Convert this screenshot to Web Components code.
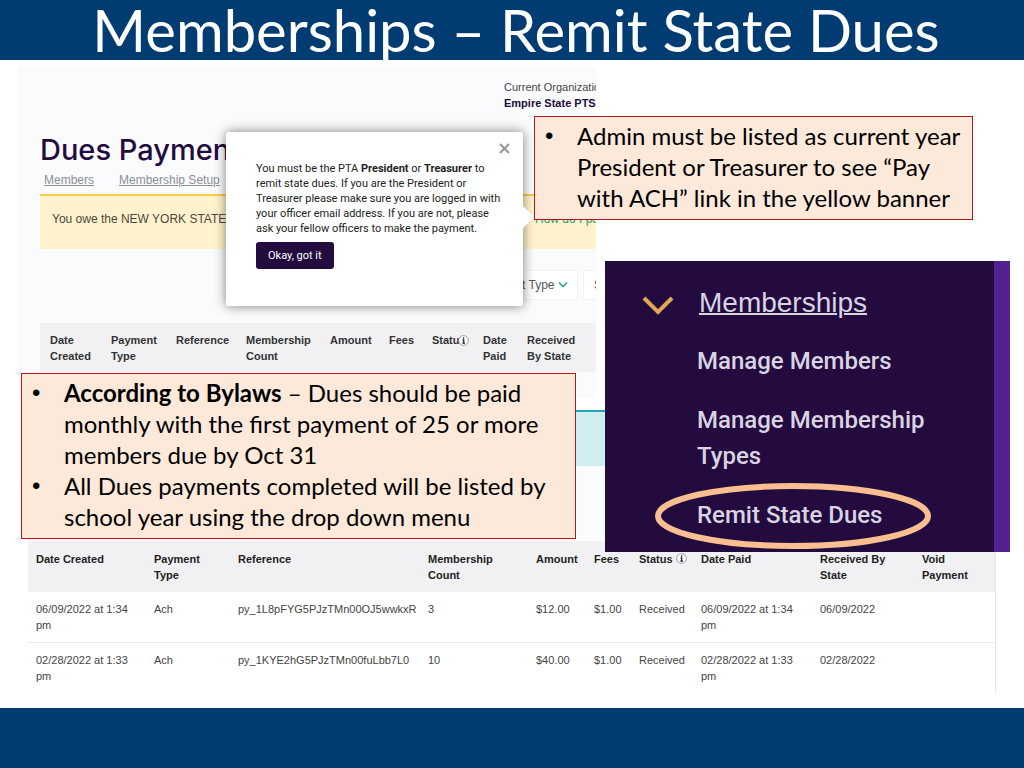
<!DOCTYPE html>
<html lang="en">
<head>
<meta charset="utf-8">
<title>Memberships – Remit State Dues</title>
<style>
body { margin: 0; font-family: "Liberation Sans", Arial, sans-serif; background: #fff; }
</style>
</head>
<body>
<slide-page>
  <span slot="title">Memberships – Remit State Dues</span>
  <dues-panel></dues-panel>
  <year-notice></year-notice>
  <payment-history></payment-history>
  <officer-popover class="popover"></officer-popover>
  <callout-box class="admin">
    <callout-item>Admin must be listed as current year President or Treasurer to see “Pay with ACH” link in the yellow banner</callout-item>
  </callout-box>
  <callout-box class="bylaws">
    <callout-item><b>According to Bylaws</b> – Dues should be paid monthly with the first payment of 25 or more members due by Oct 31</callout-item>
    <callout-item>All Dues payments completed will be listed by school year using the drop down menu</callout-item>
  </callout-box>
  <side-menu></side-menu>
</slide-page>

<script>
const define = (name, html) => {
  const template = document.createElement('template');
  template.innerHTML = html;
  customElements.define(name, class extends HTMLElement {
    constructor() {
      super();
      this.attachShadow({ mode: 'open' }).append(template.content.cloneNode(true));
    }
  });
};

const infoIcon = `<svg width="11" height="11" viewBox="0 0 11 11" aria-hidden="true"><circle cx="5.5" cy="5.5" r="4.9" fill="#fff" stroke="#777" stroke-width=".7"/><path d="M5.6 2.3v1.4M4.5 4.9h1.2v3.2M4.3 8.2h2.7" fill="none" stroke="#222" stroke-width="1.3"/></svg>`;

define('slide-page', `
<style>
:host { display: flex; flex-direction: column; min-height: 100vh; }
header { background: #003c71; height: 60px; text-align: center; }
h1 { margin: 0; padding-left: 8px; color: #fff; font: 400 58px/60px Lato, sans-serif; white-space: nowrap; }
main { position: relative; flex: 1; padding: 7px 28px 15px; }
footer { background: #003c71; height: 60px; }
::slotted(dues-panel) { margin: 0 400px 0 -10px; }
::slotted(year-notice) { margin-right: 391px; }
::slotted(officer-popover) { position: absolute; left: 226px; top: 72px; width: 297px; }
::slotted(callout-box) { position: absolute; }
::slotted(.admin) { right: 51px; top: 56px; width: 439px; }
::slotted(.bylaws) { left: 21px; top: 313px; width: 555px; }
::slotted(side-menu) { position: absolute; right: 14px; top: 201px; width: 405px; }
</style>
<header><h1><slot name="title"></slot></h1></header>
<main><slot></slot></main>
<footer></footer>`);

define('dues-panel', `
<style>
:host { display: block; overflow: hidden; background: #fafbfd; color: #333; height: 331px; }
.org { margin: 12px 0 0 486px; font-size: 11px; line-height: 16px; white-space: nowrap; color: #444; }
.org b { display: block; color: #230b3f; }
h2 { margin: 22px 0 0 22px; font: 500 29px/34px Inter, sans-serif; color: #230b3f; white-space: nowrap; }
nav { display: flex; gap: 25px; margin: 4px 0 5px 26px; font-size: 12px; line-height: 18px; }
nav a { color: #8d8f95; white-space: nowrap; }
.banner { display: flex; gap: 110px; margin-left: 22px; padding: 14px 12px 21px; border-top: 2px solid #fbcb4b; background: #fff2cc; font-size: 12px; line-height: 18px; white-space: nowrap; color: #4c4740; }
.banner a { color: #1f9d6b; text-decoration: none; }
.banner span { width: 373px; overflow: hidden; flex: none; }
.filters { display: flex; gap: 5px; margin: 21px 0 23px 454px; }
.filter { position: relative; flex: none; }
select { appearance: none; width: 106px; height: 30px; border: 1px solid #f1f2f4; border-radius: 3px; background: #fff; padding: 0 5px; font: 12px/18px "Liberation Sans", sans-serif; color: #555; }
.filter + .filter select { padding-left: 10px; }
.filter svg { position: absolute; right: 10px; top: 11px; }
table { border-collapse: collapse; table-layout: fixed; margin-left: 22px; width: calc(100% - 22px); background: #f1f1f3; }
th { padding: 9px 0 8px 10px; text-align: left; vertical-align: top; font-size: 11px; line-height: 16px; white-space: nowrap; }
th svg { vertical-align: -2px; margin-left: -8px; }
</style>
<div class="org">Current Organization<b>Empire State PTSA</b></div>
<h2>Dues Payments</h2>
<nav><a href="#members">Members</a><a href="#setup">Membership Setup</a></nav>
<div class="banner"><span>You owe the NEW YORK STATE PTA</span><a href="#how">How do I pay?</a></div>
<div class="filters">
  <div class="filter"><select aria-label="Payment Type"><option>Payment Type</option></select><svg width="10" height="8" viewBox="0 0 10 8"><path d="M1 1.5l4 4 4-4" fill="none" stroke="#22b08a" stroke-width="1.7"/></svg></div>
  <div class="filter"><select aria-label="Status"><option>Status</option></select></div>
</div>
<table>
<colgroup><col style="width:61px"><col style="width:65px"><col style="width:70px"><col style="width:84px"><col style="width:59px"><col style="width:43px"><col style="width:51px"><col style="width:44px"><col></colgroup>
<tr><th>Date<br>Created</th><th>Payment<br>Type</th><th>Reference</th><th>Membership<br>Count</th><th>Amount</th><th>Fees</th><th>Status${infoIcon}</th><th>Date<br>Paid</th><th>Received<br>By State</th></tr>
</table>`);

define('year-notice', `
<style>
:host { display: block; padding: 12px 0 75px; background: linear-gradient(#fff 12px, #fafbfd 12px); }
div { height: 54px; border-top: 2px solid #26a5b8; background: #d0edf0; }
</style>
<div></div>`);

define('payment-history', `
<style>
:host { display: block; border-right: 1px solid #e4e6e9; color: #444; }
table { border-collapse: collapse; table-layout: fixed; width: 100%; font-size: 11px; line-height: 16px; }
th, td { padding: 9px 0 9px 8px; text-align: left; vertical-align: top; }
th { color: #222; padding-top: 10px; }
thead { background: #f1f1f3; }
tbody tr + tr { border-top: 1px solid #e7e9ec; }
.t { white-space: nowrap; }
svg { vertical-align: -1px; margin-left: 3px; }
</style>
<table>
<colgroup><col style="width:118px"><col style="width:84px"><col style="width:190px"><col style="width:108px"><col style="width:58px"><col style="width:45px"><col style="width:62px"><col style="width:119px"><col style="width:102px"><col></colgroup>
<thead><tr><th>Date Created</th><th>Payment<br>Type</th><th>Reference</th><th>Membership<br>Count</th><th>Amount</th><th>Fees</th><th class="t">Status${infoIcon}</th><th>Date Paid</th><th>Received By<br>State</th><th>Void<br>Payment</th></tr></thead>
<tbody>
<tr><td>06/09/2022 at 1:34<br>pm</td><td>Ach</td><td>py_1L8pFYG5PJzTMn00OJ5wwkxR</td><td>3</td><td>$12.00</td><td>$1.00</td><td>Received</td><td>06/09/2022 at 1:34<br>pm</td><td>06/09/2022</td><td></td></tr>
<tr><td>02/28/2022 at 1:33<br>pm</td><td>Ach</td><td>py_1KYE2hG5PJzTMn00fuLbb7L0</td><td>10</td><td>$40.00</td><td>$1.00</td><td>Received</td><td>02/28/2022 at 1:33<br>pm</td><td>02/28/2022</td><td></td></tr>
</tbody></table>`);

define('officer-popover', `
<style>
:host { display: block; box-sizing: border-box; padding: 29px 28px 37px 30px; background: #fff; border-radius: 3px; box-shadow: 0 0 12px rgba(0,0,0,.5); color: #222; font-size: 11px; }
:host::after { content: ""; position: absolute; left: 100%; top: 74px; border: 11px solid transparent; border-left-color: #fff; border-right: 0; }
p { margin: 0 0 6px; font: 11px/15px Roboto, sans-serif; white-space: nowrap; }
button { font: 11px/15px Roboto, sans-serif; color: #fff; background: #230b3f; border: 0; border-radius: 3px; padding: 6px 12px; }
.close { position: absolute; right: 13px; top: 11px; padding: 0; background: none; line-height: 0; }
</style>
<button class="close" aria-label="Close"><svg width="11" height="11" viewBox="0 0 11 11"><path d="M1 1l9 9M10 1l-9 9" stroke="#999" stroke-width="2.2"/></svg></button>
<p>You must be the PTA <b>President</b> or <b>Treasurer</b> to<br>remit state dues. If you are the President or<br>Treasurer please make sure you are logged in with<br>your officer email address. If you are not, please<br>ask your fellow officers to make the payment.</p>
<button>Okay, got it</button>`);

define('callout-box', `
<style>
:host { display: block; box-sizing: border-box; padding: 3px 10px 6px; border: 1px solid #b5181b; background: #fde9d9; color: #000; font: 24px/31px Lato, sans-serif; }
</style>
<div role="list"><slot></slot></div>`);

define('callout-item', `
<style>
:host { display: flex; }
i { flex: none; width: 32px; font: 24px/31px "Liberation Sans", sans-serif; }
</style>
<i aria-hidden="true">•</i><div role="listitem"><slot></slot></div>`);

define('side-menu', `
<style>
:host { display: block; box-sizing: border-box; height: 291px; border-right: 16px solid #53208f; background: #230b3f; padding: 24px 50px 0 37px; font: 500 24px/36px Roboto, sans-serif; }
a { color: #d9d3e2; text-decoration: none; }
.head { display: flex; align-items: center; gap: 25px; }
.head svg { margin-top: 6px; }
.head a { font: 28px/36px "Liberation Sans", sans-serif; text-decoration: underline; text-decoration-thickness: 2px; }
ul { list-style: none; margin: 22px 0 0; padding: 0 0 0 55px; display: grid; gap: 23px; }
li { position: relative; }
.ring { position: absolute; left: -42px; top: -14px; overflow: visible; }
</style>
<div class="head"><svg width="32" height="20" viewBox="0 0 32 20"><path d="M2 2l14 14L30 2" fill="none" stroke="#e3a652" stroke-width="4"/></svg><a href="#memberships">Memberships</a></div>
<ul>
<li><a href="#manage">Manage Members</a></li>
<li><a href="#types">Manage Membership Types</a></li>
<li><a href="#remit">Remit State Dues</a><svg class="ring" width="276" height="66" viewBox="0 0 276 66"><ellipse cx="138" cy="33" rx="135" ry="30" fill="none" stroke="#f9bf91" stroke-width="6"/></svg></li>
</ul>`);
</script>
</body>
</html>
